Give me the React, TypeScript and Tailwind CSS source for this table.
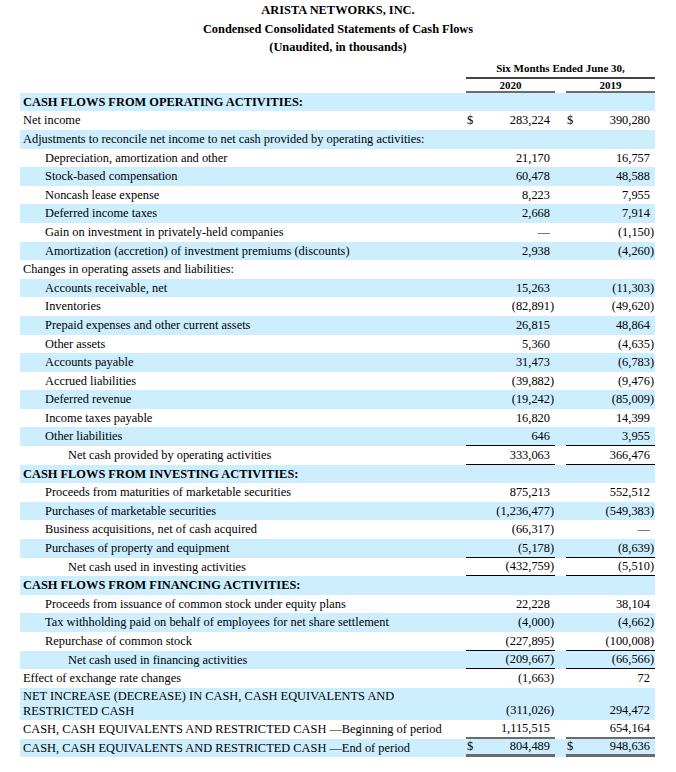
import React from "react";

type Row = {
  label: string;
  indent?: 0 | 1 | 2;
  bold?: boolean;
  a?: string;
  b?: string;
  dollar?: boolean;
  border?: "thin" | "gray" | "double";
  tall?: boolean;
};

const rows: Row[] = [
  { label: "CASH FLOWS FROM OPERATING ACTIVITIES:", bold: true },
  { label: "Net income", a: "283,224", b: "390,280", dollar: true },
  { label: "Adjustments to reconcile net income to net cash provided by operating activities:" },
  { label: "Depreciation, amortization and other", indent: 1, a: "21,170", b: "16,757" },
  { label: "Stock-based compensation", indent: 1, a: "60,478", b: "48,588" },
  { label: "Noncash lease expense", indent: 1, a: "8,223", b: "7,955" },
  { label: "Deferred income taxes", indent: 1, a: "2,668", b: "7,914" },
  { label: "Gain on investment in privately-held companies", indent: 1, a: "—", b: "(1,150)" },
  { label: "Amortization (accretion) of investment premiums (discounts)", indent: 1, a: "2,938", b: "(4,260)" },
  { label: "Changes in operating assets and liabilities:" },
  { label: "Accounts receivable, net", indent: 1, a: "15,263", b: "(11,303)" },
  { label: "Inventories", indent: 1, a: "(82,891)", b: "(49,620)" },
  { label: "Prepaid expenses and other current assets", indent: 1, a: "26,815", b: "48,864" },
  { label: "Other assets", indent: 1, a: "5,360", b: "(4,635)" },
  { label: "Accounts payable", indent: 1, a: "31,473", b: "(6,783)" },
  { label: "Accrued liabilities", indent: 1, a: "(39,882)", b: "(9,476)" },
  { label: "Deferred revenue", indent: 1, a: "(19,242)", b: "(85,009)" },
  { label: "Income taxes payable", indent: 1, a: "16,820", b: "14,399" },
  { label: "Other liabilities", indent: 1, a: "646", b: "3,955", border: "thin" },
  { label: "Net cash provided by operating activities", indent: 2, a: "333,063", b: "366,476", border: "thin" },
  { label: "CASH FLOWS FROM INVESTING ACTIVITIES:", bold: true },
  { label: "Proceeds from maturities of marketable securities", indent: 1, a: "875,213", b: "552,512" },
  { label: "Purchases of marketable securities", indent: 1, a: "(1,236,477)", b: "(549,383)" },
  { label: "Business acquisitions, net of cash acquired", indent: 1, a: "(66,317)", b: "—" },
  { label: "Purchases of property and equipment", indent: 1, a: "(5,178)", b: "(8,639)", border: "thin" },
  { label: "Net cash used in investing activities", indent: 2, a: "(432,759)", b: "(5,510)", border: "thin" },
  { label: "CASH FLOWS FROM FINANCING ACTIVITIES:", bold: true },
  { label: "Proceeds from issuance of common stock under equity plans", indent: 1, a: "22,228", b: "38,104" },
  { label: "Tax withholding paid on behalf of employees for net share settlement", indent: 1, a: "(4,000)", b: "(4,662)" },
  { label: "Repurchase of common stock", indent: 1, a: "(227,895)", b: "(100,008)", border: "thin" },
  { label: "Net cash used in financing activities", indent: 2, a: "(209,667)", b: "(66,566)", border: "thin" },
  { label: "Effect of exchange rate changes", a: "(1,663)", b: "72" },
  { label: "NET INCREASE (DECREASE) IN CASH, CASH EQUIVALENTS AND RESTRICTED CASH", a: "(311,026)", b: "294,472", tall: true },
  { label: "CASH, CASH EQUIVALENTS AND RESTRICTED CASH —Beginning of period", a: "1,115,515", b: "654,164", border: "gray" },
  { label: "CASH, CASH EQUIVALENTS AND RESTRICTED CASH —End of period", a: "804,489", b: "948,636", dollar: true, border: "double" },
];

function Num({ v, dollar, border, tall }: { v?: string; dollar?: boolean; border?: Row["border"]; tall?: boolean }) {
  const val = v ?? "";
  const neg = val.startsWith("(");
  const text = neg ? val.slice(0, -1) : val;
  const borderClass =
    border === "thin"
      ? "border-b border-black"
      : border === "gray"
      ? "border-b-2 border-[#6b6b6b]"
      : border === "double"
      ? "border-b-[3px] border-[#6b6b6b]"
      : "";
  return (
    <div
      className={`w-[89px] h-full flex justify-between ${tall ? "items-end pb-[2px] leading-[15px]" : "items-center"} ${borderClass}`}
    >
      <span className="pl-[1px]">{dollar ? "$" : ""}</span>
      <span className="flex">
        <span>{text}</span>
        <span className="w-[5px]">{neg ? ")" : ""}</span>
      </span>
    </div>
  );
}

export default function App() {
  return (
    <div
      className="w-[676px] h-[772px] bg-white text-black text-[12.4px] overflow-hidden"
      style={{ fontFamily: '"Liberation Serif", "Times New Roman", serif' }}
    >
      <div className="pt-[1px] flex flex-col items-center font-bold leading-[18.6px]">
        <div>ARISTA NETWORKS, INC.</div>
        <div>Condensed Consolidated Statements of Cash Flows</div>
        <div>(Unaudited, in thousands)</div>
      </div>
      <div className="ml-[20px] w-[635px] flex pt-[2px]">
        <div className="w-[446px]" />
        <div className="w-[189px] flex flex-col font-bold text-[11px]">
          <div className="h-[20px] leading-[18px] text-center border-b-2 border-[#444]">Six Months Ended June 30,</div>
          <div className="flex h-[14px]">
            <div className="w-[89px] text-center leading-[12px] border-b-2 border-[#6b6b6b]">2020</div>
            <div className="w-[11px]" />
            <div className="w-[89px] text-center leading-[12px] border-b-2 border-[#6b6b6b]">2019</div>
          </div>
        </div>
      </div>
      <div className="ml-[20px] w-[635px] flex flex-col">
        {rows.map((r, i) => (
          <div
            key={i}
            className={`flex ${i % 2 === 0 ? "bg-[#cceeff]" : ""} ${r.tall ? "h-[32.3px]" : "h-[18.6px]"}`}
          >
            <div
              className={`w-[446px] flex items-center ${r.bold ? "font-bold" : ""} ${
                r.indent === 2 ? "pl-[48px]" : r.indent === 1 ? "pl-[25px]" : "pl-[3px]"
              } ${r.tall ? "leading-[15px] pr-[40px]" : ""}`}
            >
              <span>{r.label}</span>
            </div>
            {r.a !== undefined ? (
              <>
                <Num v={r.a} dollar={r.dollar} border={r.border} tall={r.tall} />
                <div className="w-[11px]" />
                <Num v={r.b} dollar={r.dollar} border={r.border} tall={r.tall} />
              </>
            ) : null}
          </div>
        ))}
      </div>
    </div>
  );
}
